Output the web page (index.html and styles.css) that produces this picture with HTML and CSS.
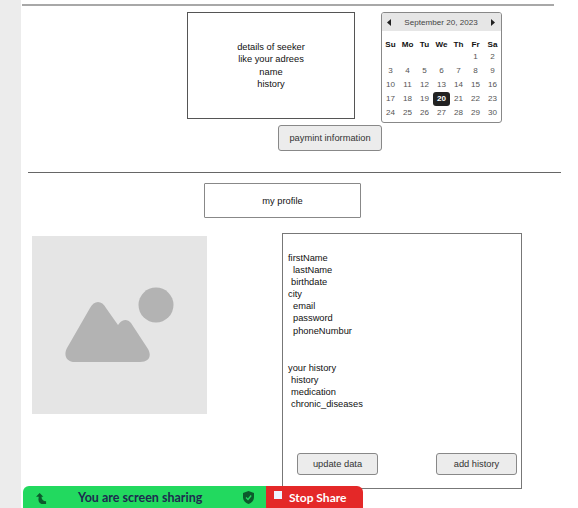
FILE: index.html
```html
<!DOCTYPE html>
<html lang="en">
<head>
    <meta charset="UTF-8">
    <meta name="viewport" content="width=device-width, initial-scale=1.0">
    <title>Seeker Profile</title>
    <link rel="stylesheet" href="styles.css">
</head>
<body>
<div class="strip"></div>
<div class="main">
    <hr class="rule rule-top">
    <div class="top-row">
        <div class="seeker">
            <div>details of seeker</div>
            <div>like your adrees</div>
            <div>name</div>
            <div>history</div>
        </div>
        <div class="calendar">
            <div class="cal-head">
                <svg class="cal-arrow" width="4" height="7" viewBox="0 0 4 7"><path d="M4 0V7L0 3.5Z"/></svg>
                <span>September 20, 2023</span>
                <svg class="cal-arrow" width="4" height="7" viewBox="0 0 4 7"><path d="M0 0V7L4 3.5Z"/></svg>
            </div>
            <div class="cal-grid">
                <b>Su</b><b>Mo</b><b>Tu</b><b>We</b><b>Th</b><b>Fr</b><b>Sa</b>
                <i></i><i></i><i></i><i></i><i></i><span>1</span><span>2</span>
                <span>3</span><span>4</span><span>5</span><span>6</span><span>7</span><span>8</span><span>9</span>
                <span>10</span><span>11</span><span>12</span><span>13</span><span>14</span><span>15</span><span>16</span>
                <span>17</span><span>18</span><span>19</span><span class="today">20</span><span>21</span><span>22</span><span>23</span>
                <span>24</span><span>25</span><span>26</span><span>27</span><span>28</span><span>29</span><span>30</span>
            </div>
        </div>
    </div>
    <button class="btn btn-pay">paymint information</button>
    <hr class="rule rule-mid">
    <div class="profile-title">my profile</div>
    <div class="bottom-row">
        <div class="avatar">
            <svg width="109" height="76" viewBox="0 0 109 76">
                <circle cx="91" cy="18" r="17.500" fill="#b3b3b3"/>
                <path fill="#b3b3b3" d="M10 75C2 75 -2 69 2 61L25 21C29 13 37 13 41 21L53 38L55 35.500C58 32 63 32 66 36L83 62C87 69 84 75 75 75Z"/>
            </svg>
        </div>
        <div class="info">
            <div class="fields">
                <div>firstName</div>
                <div class="in2">lastName</div>
                <div class="in1">birthdate</div>
                <div>city</div>
                <div class="in2">email</div>
                <div class="in2">password</div>
                <div class="in2">phoneNumbur</div>
            </div>
            <div class="fields history">
                <div>your history</div>
                <div class="in1">history</div>
                <div class="in1">medication</div>
                <div class="in1">chronic_diseases</div>
            </div>
            <div class="info-actions">
                <button class="btn btn-small">update data</button>
                <button class="btn btn-small">add history</button>
            </div>
        </div>
    </div>
</div>

<div class="share-bar">
    <div class="share-status">
        <svg class="share-arrow" width="11" height="11" viewBox="0 0 12 12"><path fill="#0c5a2c" d="M4 0L8 4H6C6 7 8 9 11 9V12H6C3 11 2 8 3 4H0Z"/></svg>
        <span class="share-text">You are screen sharing</span>
        <svg class="share-shield" width="11" height="13" viewBox="0 0 11 13"><path fill="#0c5a2c" d="M5.500 0L11 2V6C11 9.500 8.500 12 5.500 13C2.500 12 0 9.500 0 6V2Z"/><path fill="none" stroke="#22d95f" stroke-width="1.400" d="M3 6.500L5 8.500L8.200 4.500"/></svg>
    </div>
    <div class="share-stop">
        <span class="stop-box"></span>
        <span>Stop Share</span>
    </div>
</div>
</body>
</html>
```

FILE: styles.css
```css
body {
    font-family: "Liberation Sans", Arial, sans-serif;
    font-size: 9.300px;
    color: #111;
    margin: 0;
    height: 508px;
    overflow: hidden;
    display: flex;
    background-color: white;
}
.strip {
    width: 21px;
    flex-shrink: 0;
    background-color: #ececec;
}
.main {
    flex: 1;
    min-width: 0;
}
.rule {
    border: none;
    margin: 0;
}
.rule-top {
    height: 2px;
    background-color: #a8a8a8;
    width: 532px;
    margin: 4px 0 0 1px;
}
.top-row {
    display: flex;
    align-items: flex-start;
    margin: 6px 0 0 166px;
}
.seeker {
    width: 168px;
    height: 107px;
    box-sizing: border-box;
    border: 1px solid #555;
    padding-top: 28px;
    text-align: center;
    line-height: 12.300px;
    margin-right: 26px;
}
.calendar {
    width: 121px;
    height: 111px;
    box-sizing: border-box;
    border: 1px solid #888;
    border-radius: 3px;
    overflow: hidden;
    font-size: 8.100px;
}
.cal-head {
    height: 18px;
    background-color: #e6e6e6;
    display: flex;
    align-items: center;
    justify-content: space-between;
    padding: 0 6px 0 5px;
    color: #444;
}
.cal-arrow {
    fill: #222;
}
.cal-grid {
    display: grid;
    grid-template-columns: repeat(7, 17px);
    grid-template-rows: 12px repeat(5, 14px);
    margin-top: 7px;
    text-align: center;
    line-height: 14px;
    color: #555;
}
.cal-grid b {
    color: #111;
}
.cal-grid i {
    display: block;
}
.today {
    background-color: #222;
    color: white;
    font-weight: bold;
    border-radius: 3px;
}
.btn {
    font-family: inherit;
    font-size: 9.300px;
    color: #333;
    background-color: #ececec;
    border: 1px solid #888;
    border-radius: 3px;
    padding: 0;
}
.btn-pay {
    display: block;
    width: 104px;
    height: 26px;
    margin: 2px 0 0 257px;
}
.rule-mid {
    height: 1px;
    background-color: #666;
    width: 533px;
    margin: 21px 0 0 7px;
}
.profile-title {
    width: 157px;
    height: 35px;
    box-sizing: border-box;
    border: 1px solid #888;
    border-radius: 1px;
    margin: 10px 0 0 183px;
    padding-top: 1px;
    display: flex;
    align-items: center;
    justify-content: center;
}
.bottom-row {
    display: flex;
    align-items: flex-start;
    margin: 15px 0 0 11px;
}
.avatar {
    width: 175px;
    height: 178px;
    margin-top: 3px;
    margin-right: 75px;
    background-color: #e5e5e5;
    display: flex;
    align-items: center;
    justify-content: center;
}
.info {
    width: 240px;
    height: 256px;
    box-sizing: border-box;
    border: 1px solid #777;
    padding: 18px 4px 0 5px;
    display: flex;
    flex-direction: column;
}
.fields {
    line-height: 12.100px;
}
.history {
    margin-top: 25px;
}
.in1 {
    padding-left: 3px;
}
.in2 {
    padding-left: 5px;
}
.info-actions {
    display: flex;
    justify-content: space-between;
    margin-top: auto;
    margin-bottom: 13px;
    padding-left: 9px;
}
.btn-small {
    width: 81px;
    height: 22px;
}
.share-bar {
    position: absolute;
    left: 23px;
    top: 486px;
    width: 340px;
    height: 22px;
    display: flex;
    font-family: Lato, "Noto Sans", sans-serif;
    font-size: 12.500px;
    font-weight: 700;
}
.share-status {
    width: 243px;
    background-color: #22d95f;
    color: #1d2b4f;
    border-radius: 6px 0 0 0;
    display: flex;
    align-items: center;
}
.share-arrow {
    margin: 2px 0 0 13px;
}
.share-text {
    margin-left: 31px;
    width: 125px;
    white-space: nowrap;
}
.share-shield {
    margin-left: 40px;
}
.share-stop {
    flex: 1;
    background-color: #e42828;
    color: white;
    font-size: 12px;
    border-radius: 0 6px 0 0;
    display: flex;
    align-items: center;
    padding-left: 8px;
}
.stop-box {
    width: 8px;
    height: 8px;
    background-color: #eef4ff;
    margin: 0 7px 5px 0;
}
```
